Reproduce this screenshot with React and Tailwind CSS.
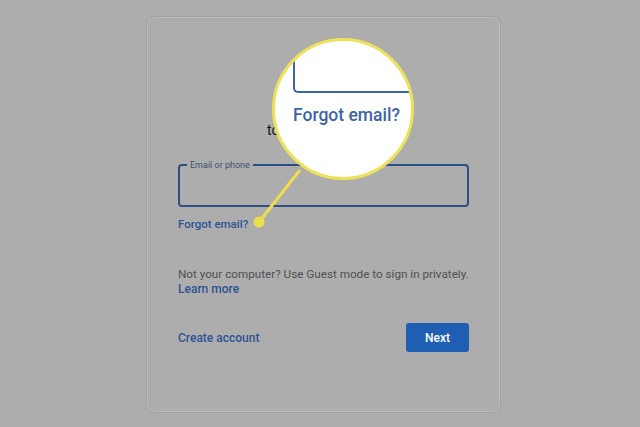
export default function App() {
  return (
    <div className="relative w-[640px] h-[427px] overflow-hidden bg-[#adadad] flex pl-[146px] pt-[16px]" style={{ fontFamily: 'Roboto, "Liberation Sans", sans-serif' }}>
      <div className="relative w-[355px] h-[397px] rounded-[8px] border border-[#a2a2a2] shadow-[inset_0_0_0_1px_#bcbcbc] bg-[#adadad] px-[31px] pt-[103px] flex flex-col">
        <div className="text-[14px] text-[#111] pl-[89px] h-[20px] leading-[20px]">to</div>
        <div className="mt-[24px] relative h-[43px] border-2 border-[#2e4f82] rounded-[4px]">
          <span className="absolute -top-[8px] left-[7px] px-[3px] bg-[#adadad] text-[9px] leading-[14px] text-[#3d5377]">Email or phone</span>
        </div>
        <div className="mt-[9px] text-[11.5px] font-medium text-[#2d5493] leading-[16px]">Forgot email?</div>
        <div className="mt-[34px] text-[11.7px] text-[#505050] leading-[16px]">Not your computer? Use Guest mode to sign in privately.</div>
        <div className="text-[12px] font-medium text-[#2d5493] leading-[15px]">Learn more</div>
        <div className="mt-[26px] flex items-center justify-between">
          <span className="text-[12px] font-medium text-[#2d5493]">Create account</span>
          <span className="w-[63px] h-[29px] rounded-[3px] bg-[#1e5fb3] text-white text-[12px] font-medium flex items-center justify-center">Next</span>
        </div>
      </div>
      <svg className="absolute left-0 top-0" width="640" height="427">
        <line x1="300" y1="170" x2="259" y2="222" stroke="#ecdf4c" strokeWidth="3" />
        <circle cx="259" cy="222" r="5.5" fill="#ecdf4c" />
      </svg>
      <div className="absolute left-[272px] top-[38px] w-[142px] h-[142px] rounded-full bg-white border-[3px] border-[#ece25a] overflow-hidden">
        <div className="absolute left-[18px] top-[16px] w-[200px] h-[36px] border-l-2 border-b-2 border-[#3d64a8] rounded-bl-[5px]"></div>
        <div className="absolute left-[18px] top-[62px] text-[17.5px] font-medium text-[#3e64a6] leading-[24px] whitespace-nowrap">Forgot email?</div>
      </div>
    </div>
  );
}
